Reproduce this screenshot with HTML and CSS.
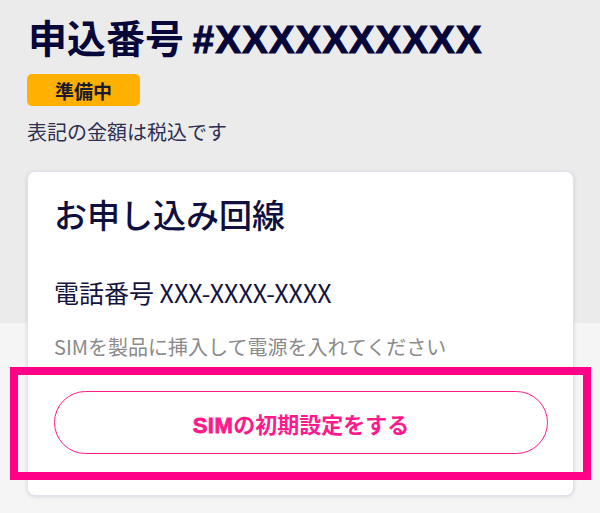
FILE: index.html
```html
<!DOCTYPE html>
<html lang="ja">
<head>
<meta charset="utf-8">
<title>申込番号</title>
<link rel="stylesheet" href="styles.css">
</head>
<body>
<main class="page">
  <h1 class="title">申込番号 <span class="title-num">#XXXXXXXXXX</span></h1>
  <div class="badge">準備中</div>
  <p class="note">表記の金額は税込です</p>
  <section class="card">
    <h2 class="card-title">お申し込み回線</h2>
    <p class="phone">電話番号 XXX-XXXX-XXXX</p>
    <p class="desc">SIMを製品に挿入して電源を入れてください</p>
    <button class="btn" type="button"><span class="btn-latin">SIM</span>の初期設定をする</button>
  </section>
</main>
<div class="highlight" aria-hidden="true"></div>
</body>
</html>
```

FILE: styles.css
```css
html, body {
  margin: 0;
  padding: 0;
}
body {
  width: 600px;
  height: 513px;
  overflow: hidden;
  position: relative;
  background: linear-gradient(to bottom, #ebebeb 0, #ebebeb 323px, #f5f5f5 323px, #f5f5f5 100%);
  font-family: "Noto Sans CJK JP", sans-serif;
  color: #16163f;
}
.page {
  padding: 13px 26px 0 27px;
  display: flex;
  flex-direction: column;
  align-items: flex-start;
}
.title {
  margin: 0;
  height: 46px;
  font-family: "Noto Sans CJK JP", sans-serif;
  font-size: 39px;
  line-height: 46px;
  font-weight: 700;
  color: #07073a;
  padding-left: 1px;
}
.title-num {
  font-family: "Liberation Sans", sans-serif;
  font-weight: 700;
  font-size: 38px;
  line-height: 1;
  letter-spacing: 1.4px;
  -webkit-text-stroke: 1.2px #07073a;
}
.badge {
  margin-top: 15px;
  height: 32px;
  box-sizing: border-box;
  width: 113px;
  display: flex;
  align-items: center;
  justify-content: center;
  background: #ffb000;
  border-radius: 5px;
  font-size: 19px;
  font-weight: 700;
  color: #1a1a2e;
}
.note {
  margin: 11px 0 0;
  font-size: 20px;
  line-height: 30px;
  color: #2f2f4f;
}
.card {
  margin-top: 24px;
  align-self: stretch;
  background: #fff;
  border: 1px solid #e2e2ec;
  border-radius: 8px;
  box-shadow: 0 1px 4px rgba(20, 20, 70, 0.12);
  padding: 20px 25px 41px 26px;
  display: flex;
  flex-direction: column;
}
.card-title {
  margin: 0;
  font-size: 33px;
  line-height: 45px;
  font-weight: 500;
  color: #10103f;
}
.phone {
  margin: 37px 0 0;
  font-size: 25px;
  line-height: 36px;
  color: #14143f;
}
.desc {
  margin: 23px 0 0;
  font-size: 20px;
  line-height: 28px;
  color: #8a8a8a;
}
.btn {
  margin-top: 30px;
  height: 63px;
  width: 100%;
  background: #fff;
  border: 1.5px solid #ff1a8c;
  border-radius: 32px;
  font-family: "Noto Sans CJK JP", sans-serif;
  font-size: 22px;
  font-weight: 700;
  color: #ff1a8c;
  cursor: pointer;
}
.btn-latin {
  font-family: "Liberation Sans", sans-serif;
  letter-spacing: 0.5px;
  -webkit-text-stroke: 0.8px #ff1a8c;
}
.highlight {
  position: absolute;
  left: 10px;
  top: 367px;
  width: 581px;
  height: 113px;
  box-sizing: border-box;
  border: 8px solid #ff0088;
  pointer-events: none;
}
```
